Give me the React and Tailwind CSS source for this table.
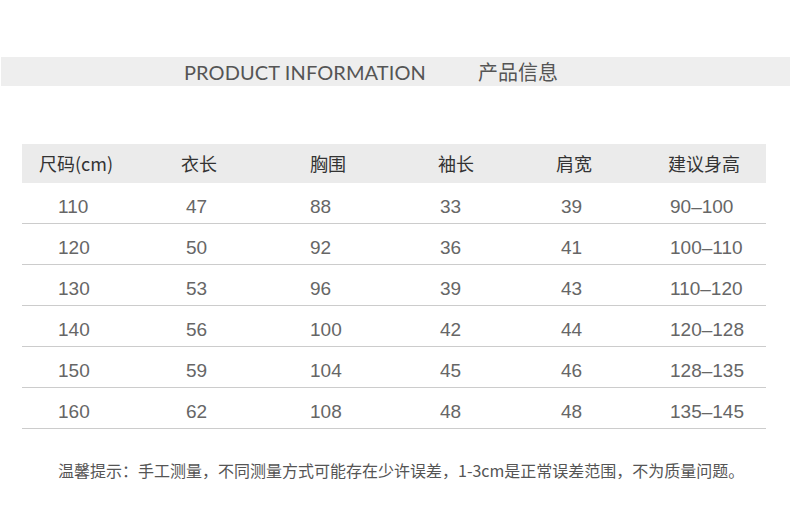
import React from 'react';

const headers = ['尺码(cm)', '衣长', '胸围', '袖长', '肩宽', '建议身高'];

// data cells sit a little right of their header
const dataPad = ['pl-[19px]', 'pl-[5px]', 'pl-0', 'pl-[2px]', 'pl-[5px]', 'pl-[2px]'];

const rows = [
  ['110', '47', '88', '33', '39', '90–100'],
  ['120', '50', '92', '36', '41', '100–110'],
  ['130', '53', '96', '39', '43', '110–120'],
  ['140', '56', '100', '42', '44', '120–128'],
  ['150', '59', '104', '45', '46', '128–135'],
  ['160', '62', '108', '48', '48', '135–145'],
];

const cols = 'grid grid-cols-[142px_129px_128px_118px_112px_1fr] px-[17px]';

export default function App() {
  return (
    <div className="w-[790px] h-[519px] bg-white overflow-hidden pt-[57px] font-['Noto_Sans_CJK_SC',sans-serif]">
      {/* title band */}
      <div className="h-[29px] ml-[1px] bg-[#eeeeee] flex items-center">
        <span className="ml-[183px] text-[20px] text-[#555] tracking-[0.1px] leading-none font-['Lato','Liberation_Sans',sans-serif]">
          PRODUCT INFORMATION
        </span>
        <span className="ml-[52px] text-[20px] text-[#555] leading-none">产品信息</span>
      </div>

      {/* size table */}
      <div className="mt-[58px] mx-[22px] w-[744px]">
        <div className={`${cols} h-[39px] items-center bg-[#ebebeb] text-[18px] text-[#333]`}>
          {headers.map((h) => (
            <div key={h} className="whitespace-nowrap">{h}</div>
          ))}
        </div>
        {rows.map((r, i) => (
          <div
            key={i}
            className={`${cols} h-[41px] pt-[8px] items-center border-b border-[#cccccc] text-[19px] text-[#666] font-['Liberation_Sans',sans-serif]`}
          >
            {r.map((c, j) => (
              <div key={j} className={`${dataPad[j]} whitespace-nowrap`}>
                {c}
              </div>
            ))}
          </div>
        ))}
      </div>

      <p className="mt-[33px] ml-[58px] text-[16px] text-[#555] leading-none">
        温馨提示：手工测量，不同测量方式可能存在少许误差，1-3cm是正常误差范围，不为质量问题。
      </p>
    </div>
  );
}
